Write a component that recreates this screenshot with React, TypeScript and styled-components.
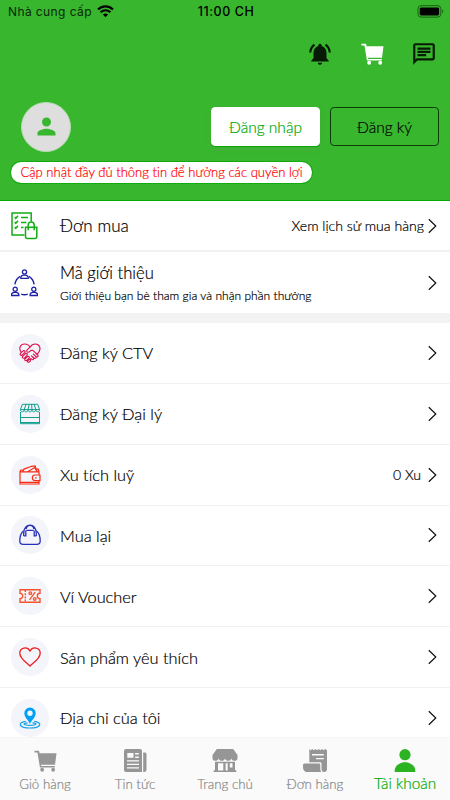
import React from "react";
import styled, { createGlobalStyle } from "styled-components";
import { MdNotificationsActive, MdOutlineChat, MdPerson } from "react-icons/md";

const GlobalStyle = createGlobalStyle`
  * { box-sizing: border-box; }
  body { margin: 0; background: #fff; }
`;

const Screen = styled.div`
  width: 450px;
  height: 800px;
  display: flex;
  flex-direction: column;
  overflow: hidden;
  background: #fff;
  color: #000;
  font-family: Lato, "Noto Sans", sans-serif;
  font-weight: 300;
  font-variant-ligatures: none;
  -webkit-text-stroke: 0.2px currentColor;
`;

const Header = styled.header`
  flex: none;
  height: 201px;
  background: #38b62e;
  border-bottom: 1px solid #00aa00;
`;

const StatusBar = styled.div`
  height: 22px;
  display: grid;
  grid-template-columns: 1fr auto 1fr;
  align-items: center;
  padding: 0 6px 0 8px;
  font-family: Inter, Roboto, sans-serif;
  font-weight: 400;
  font-size: 12px;
  line-height: 22px;
  color: #0a2808;
  -webkit-text-stroke: 0;
`;

const Carrier = styled.div`
  display: flex;
  align-items: center;
  gap: 5px;
  padding-top: 1px;
  letter-spacing: 0.4px;

  svg { margin-top: -2px; }
`;

const Clock = styled.div`
  padding-top: 1px;
  font-weight: 500;
  font-size: 12.5px;
  letter-spacing: 0.55px;
  color: #000;
`;

const BatterySlot = styled.div`
  display: flex;
  justify-content: flex-end;
`;

const Actions = styled.div`
  display: flex;
  justify-content: flex-end;
  align-items: center;
  gap: 27.5px;
  height: 26px;
  margin-top: 19px;
  padding-right: 13px;
  color: #fff;

  svg { display: block; }
`;

const Account = styled.div`
  display: flex;
  align-items: center;
  height: 50px;
  margin-top: 34.5px;
  padding: 0 11px 0 21px;
`;

const Avatar = styled.div`
  display: grid;
  place-items: center;
  width: 50px;
  height: 50px;
  margin-right: auto;
  border-radius: 50%;
  background: #dedede;
  border: 1px solid #b4dcb0;
  color: #38b62e;
`;

const AuthButton = styled.button<{ $filled?: boolean }>`
  height: 39px;
  width: 109px;
  margin-left: ${(p) => (p.$filled ? 0 : 10)}px;
  padding: 1px 0 0;
  border: 1px solid ${(p) => (p.$filled ? "#fff" : "#0b3d08")};
  border-radius: 4px;
  background: ${(p) => (p.$filled ? "#fff" : "transparent")};
  box-shadow: ${(p) => (p.$filled ? "0 1px 1px #00a800, 0 3px 5px rgba(120,160,100,.3)" : "none")};
  color: ${(p) => (p.$filled ? "#00a800" : "#000")};
  font: 300 15.5px/20px Lato, sans-serif;
  -webkit-text-stroke: 0.2px currentColor;
`;

const Notice = styled.div`
  width: 301px;
  height: 21px;
  margin: 10px 0 0 11px;
  border-radius: 11px;
  background: #fff;
  box-shadow: 0 0 0 1px #12ac10;
  color: #f00;
  font-size: 13px;
  letter-spacing: 0.03px;
  line-height: 21px;
  text-align: center;
  white-space: nowrap;
`;

const Row = styled.div<{ $height: number; $line?: number }>`
  flex: none;
  display: flex;
  align-items: center;
  height: ${(p) => p.$height}px;
  padding: 0 12px 0 11px;
  border-bottom: ${(p) => p.$line ?? 0}px solid #f1f1f2;
`;

const IconSlot = styled.div<{ $round?: boolean }>`
  flex: none;
  display: grid;
  place-items: center;
  width: ${(p) => (p.$round ? 38 : 27)}px;
  height: ${(p) => (p.$round ? 38 : 28)}px;
  margin-right: ${(p) => (p.$round ? 11 : 22)}px;
  border-radius: ${(p) => (p.$round ? "50%" : "0")};
  background: ${(p) => (p.$round ? "#f4f5fa" : "transparent")};

  svg { display: block; }
`;

const Labels = styled.div`
  flex: 1;
  white-space: nowrap;
`;

const Label = styled.div<{ $size?: number; $tracking?: number }>`
  padding-top: 1px;
  font-size: ${(p) => p.$size ?? 16.35}px;
  line-height: 22px;
  letter-spacing: ${(p) => p.$tracking ?? 0}px;
`;

const Hint = styled.div`
  padding-top: 3px;
  font-size: 12px;
  line-height: 18px;
  letter-spacing: 0.035px;
`;

const Value = styled.div<{ $gap?: number }>`
  margin-right: ${(p) => p.$gap ?? 4}px;
  padding-top: 1px;
  font-size: 14.1px;
  line-height: 20px;
  white-space: nowrap;
`;

const Band = styled.div`
  flex: none;
  height: 10px;
  background: #f3f3f3;
`;

const List = styled.main`
  flex: 1;
  min-height: 0;
  overflow: hidden;
`;

const TabBar = styled.nav`
  flex: none;
  display: grid;
  grid-template-columns: repeat(5, 1fr);
  height: 63px;
  background: #fafafa;
  border-top: 1px solid #f5f5f5;
`;

const TabIcon = styled.div`
  display: grid;
  place-items: center;
  height: 27px;

  svg { display: block; }
`;

const Tab = styled.div<{ $active?: boolean }>`
  display: flex;
  flex-direction: column;
  align-items: center;
  padding-top: 9px;
  color: ${(p) => (p.$active ? "#2bb322" : "#969696")};
`;

const TabLabel = styled.div<{ $active?: boolean }>`
  margin-top: ${(p) => (p.$active ? -1 : 0)}px;
  color: ${(p) => (p.$active ? "#00aa00" : "#888")};
  font-size: ${(p) => (p.$active ? 15.3 : 13.3)}px;
  line-height: 20px;
  white-space: nowrap;
`;

const Chevron = () => (
  <svg width="10" height="16" viewBox="0 0 10 16" fill="none" stroke="#111" strokeWidth="1.2">
    <path d="M.8 1.2 7.8 8l-7 6.8" />
  </svg>
);

const Wifi = () => (
  <svg width="17" height="13" viewBox="0 0 17 13" fill="none" stroke="#000" strokeWidth="2.1">
    <path d="M1 4.4c4.2-4.1 10.8-4.1 15 0M3.6 7.3c2.8-2.7 7-2.7 9.8 0" />
    <path d="M5.9 9.6a3.8 3.8 0 0 1 5.2 0L8.5 12.2z" fill="#000" stroke="none" />
  </svg>
);

const Battery = () => (
  <svg width="27" height="13" viewBox="0 0 27 13">
    <rect x="1" y=".7" width="22.8" height="11.4" rx="3" fill="none" stroke="#176313" />
    <rect x="2.7" y="2.4" width="19.4" height="8" rx="1.4" />
    <path d="M25.2 4.5c1.5.7 1.5 3.2 0 3.9z" fill="#176313" />
  </svg>
);

const Cart = () => (
  <svg width="23" height="22" viewBox="0 0 24 22" preserveAspectRatio="none" fill="currentColor">
    <path d="M.5.7h4.7l.7 2.6h17.6l-1.6 11.5H7.2l.3 1.3h14.2v1.4H6.2L3.6 2.5H.5z" />
    <circle cx="8.5" cy="19.8" r="2" />
    <circle cx="20" cy="19.8" r="2" />
  </svg>
);

const OrderList = () => (
  <svg width="27" height="28" viewBox="0 0 27 28" fill="none" stroke="#12ad12" strokeWidth="1.5">
    <path d="M13.5 23H1V1h19.2v8.5M10 5.5h7M10 10.5h5.5M10 15.5h2.5" />
    <path d="m3.8 5 1 1.3 2.2-2.6M3.8 10l1 1.3L7 8.7M3.8 15l1 1.3L7 13.7" />
    <path d="M14.5 15.3h11.3v9.2a2 2 0 0 1-2 2h-7.3a2 2 0 0 1-2-2zM17.2 18.3v-5.1c0-4.2 6-4.2 6 0v5.1" />
  </svg>
);

const Referral = () => (
  <svg width="27" height="28" viewBox="0 0 27 28" fill="none" stroke="#1c20a8" strokeWidth="1.3">
    {[[13.5, 0], [4.2, 17.2], [22.8, 17.2]].map(([x, y]) => (
      <g key={x} transform={`translate(${x} ${y})`}>
        <circle cx="0" cy="3" r="2.1" />
        <path d="M-3.7 9.3v-1.1c0-1.4 1.6-1.8 2.6-2.1h2.2c1 .3 2.6.7 2.6 2.1v1.1z" />
      </g>
    ))}
    <path d="M9 7.4c-2.8 1.8-4.6 4.4-5.1 8M18 7.4c2.8 1.8 4.6 4.4 5.1 8M10.2 25.2c2.1.7 4.5.7 6.6 0" />
  </svg>
);

const Handshake = () => (
  <svg width="22" height="20" viewBox="0 0 22 20" fill="none" stroke="#dc1450" strokeWidth="1.15" strokeLinejoin="round">
    <path d="M2.5 9.6C-1 5.2 1.5 1 5.7 1c2.4 0 4.3 1.2 5.3 3.2C12.3 2 14 1 16.3 1c4.3 0 6.3 4.8 3 8.8l-1.8 2.1" />
    <path d="M11 4.2 7.7 7.4c-.3 1.9 1.7 2.5 3.2 1l1.4-1.1h1.5l5.1 4.7c.8 1.5-.8 2.5-2 1.4l-2.5-2.2 2.5 2.3c.8 1.4-.8 2.5-2 1.4l-2.4-2 2.1 2.1c.6 1.4-.8 2.3-2 1.2l-1.3-1.1" />
    <path d="m2.5 9.4 2-1.8c1.4-.2 2 .8 1.4 1.8L3 12.2c-1.5.6-2.5-.8-1.5-2zM3.4 13.7l3.4-3.3c1.5-.3 2 1 1.2 2l-2.6 2.7c-1.6.5-2.6-.5-2-1.4zM5.8 16.2l3-2.9c1.5-.2 2 .9 1.2 1.9l-2.2 2.3c-1.5.5-2.5-.4-2-1.3zM8.4 18l2-1.8c1.3 0 1.5 1 .9 1.8l-1.2 1.2c-1.2.2-1.9-.4-1.7-1.2z" />
  </svg>
);

const Stall = () => (
  <svg width="22" height="22" viewBox="0 0 22 22" fill="none" stroke="#129c8d">
    <path d="M1.5 9v11.7h19V9M1.5 14.5h19M1.5 19.5h19" />
    <path d="M3.4 1.3h15.2l2 5.3H1.4zM7.1 1.3 5.2 6.6M10.2 1.3 9 6.6M12.6 1.3 13 6.6M15.2 1.3l1.6 5.3M1.4 6.6c0 3 3.8 3 3.8 0 0 3 3.9 3 3.9 0 0 3 3.9 3 3.9 0 0 3 3.8 3 3.8 0 0 3 3.8 3 3.8 0" />
  </svg>
);

const Wallet = () => (
  <svg width="22" height="20" viewBox="0 0 22 20" fill="none" stroke="#f52b16" strokeWidth="1.2">
    <path d="M20 9.7V6.8H2A1 1 0 0 1 2 5h2.2M1 6v13h19v-3.2M3.6 6.7 5 4.1l7.5-2.8 3.6-.3 1.3 4M9 6.4l6.7-3.8 2.5 4M17 4.2h2.2l.8 2.6M1 17.4h19" />
    <path d="M21 10v5.7h-4.8c-3.8 0-3.8-5.7 0-5.7zM16.2 12.9h1.4" />
  </svg>
);

const Handbag = () => (
  <svg width="22" height="22" viewBox="0 0 22 22" fill="none" stroke="#2631ba" strokeWidth="1.3">
    <path d="M4.5 7C2.2 8.8.8 13.6.8 17c0 2 1.3 3.3 3.3 3.3h13.8c2 0 3.3-1.3 3.3-3.3 0-3.4-1.4-8.2-3.7-10M7.3 6.3h7.4" />
    <path d="M4.7 12V9.5c0-11.3 12.6-11.3 12.6 0V12M6.8 6.4v5.4H4.7M15.2 6.4v5.4h2.1M7.1 5C8 .2 14 .2 14.9 5" />
  </svg>
);

const Voucher = () => (
  <svg width="22" height="16" viewBox="0 0 22 16" fill="none" stroke="#f8532f" strokeWidth="1.4">
    <path d="M1 1.7h20v3.6a2.7 2.7 0 0 0 0 5.4v3.6H1v-3.6a2.7 2.7 0 0 0 0-5.4z" />
    <path d="M6.3 2v12" strokeDasharray="2 1.2" />
    <path d="m16.2 4.2-5.7 7.6" />
    <circle cx="11.3" cy="5.2" r="1.3" />
    <circle cx="15.7" cy="10.9" r="1.3" />
  </svg>
);

const Heart = () => (
  <svg width="22" height="20" viewBox="0 0 22 20" fill="none" stroke="#f01c20" strokeWidth="1.3">
    <path d="M11 19C7.8 15.8.8 11.6.8 6.2.8.5 8.3-1 11 4c2.7-5 10.2-3.5 10.2 2.2C21.2 11.6 14.2 15.8 11 19z" />
  </svg>
);

const Pin = () => (
  <svg width="22" height="22" viewBox="0 0 22 22">
    <g fill="none" stroke="#139fea" strokeWidth="1.2">
      <path d="M6.8 14.3c-8 1.1-8 6.5 4.2 6.7 12.2-.2 12.2-5.6 4.2-6.7" />
      <path d="M8.6 15.8c-5.3.6-5 2.5 2.4 2.6 7.4-.1 7.7-2 2.4-2.6" />
    </g>
    <path fill="#00a0f4" fillRule="evenodd" d="M11 17C10 13.4 5.3 10.7 5.3 6.2a5.7 5.7 0 0 1 11.4 0c0 4.5-4.7 7.2-5.7 10.8zm0-13.5a2.7 2.7 0 1 0 0 5.4 2.7 2.7 0 0 0 0-5.4z" />
  </svg>
);

const News = () => (
  <svg width="24" height="27" viewBox="0 0 24 27">
    <path fill="currentColor" fillRule="evenodd" d="M3 2h14a2 2 0 0 1 2 2v21H3a2 2 0 0 1-2-2V4a2 2 0 0 1 2-2zm1.3 4.1v4.7h6.2V6.1zm7.8 0v1.4h3.7V6.1zm0 3.5V11h3.7V9.6zM4 13.2v1.3h12v-1.3zm0 3.5V18h12v-1.3zm0 3.5v1.3h12v-1.3zM20.2 5.5H22a1.5 1.5 0 0 1 1.5 1.5v15.7c0 1.6-1.5 2.3-3.3 2.3z" />
  </svg>
);

const Shop = () => (
  <svg width="26" height="27" viewBox="0 0 26 27" fill="currentColor">
    <path d="M4.8 2h16.4l4.3 6v3.2c0 3.5-5.5 3.5-6.2.2-.8 3.1-5.4 3.1-6.3 0-.9 3.1-5.5 3.1-6.3 0-.7 3.3-6.2 3.3-6.2-.2V8z" />
    <path fillRule="evenodd" d="M3 14.8h20v8.5h1.3V25H1.7v-1.7H3zm3 1.5v7.2h5.3v-7.2zm7.6 0v7.2h2.1v-7.2zm4.2 0v4.3h2.7v-4.3z" />
  </svg>
);

const Receipt = () => (
  <svg width="26" height="27" viewBox="0 0 26 27" fill="currentColor">
    <path fillRule="evenodd" d="m7.3 2 1.5 1.3L10.4 2 12 3.3 13.6 2l1.6 1.3L16.8 2l1.6 1.3L20 2l1.6 1.3L23.2 2l1.8 1.2V22c0 1.8-1.1 3-2.8 3-2.2 0-2.7-1.6-2.7-3v-5.4c0-.8-.6-1.4-1.4-1.4H7.3zM10 7.1v1.4h11.8V7.1zm3.9 3.8v1.4h7.9v-1.4z" />
    <path d="M1 18.3a1.6 1.6 0 0 1 1.6-1.7h14.3a1.4 1.4 0 0 1 1.4 1.4v4c0 1.3.4 2.4 1.2 3H4.8C2.4 25 1 22.6 1 20z" />
  </svg>
);

const Person = () => (
  <svg width="24" height="27" viewBox="0 0 24 27" fill="currentColor">
    <circle cx="12" cy="7.7" r="5.6" />
    <path d="M1.7 25v-1.5c0-4.7 4.8-8.3 10.3-8.3s10.3 3.6 10.3 8.3V25z" />
  </svg>
);

const menu = [
  { label: "Đăng ký CTV", icon: <Handshake /> },
  { label: "Đăng ký Đại lý", icon: <Stall /> },
  { label: "Xu tích luỹ", icon: <Wallet />, value: "0 Xu" },
  { label: "Mua lại", icon: <Handbag /> },
  { label: "Ví Voucher", icon: <Voucher /> },
  { label: "Sản phẩm yêu thích", icon: <Heart /> },
  { label: "Địa chỉ của tôi", icon: <Pin /> },
];

const tabs = [
  { label: "Giỏ hàng", icon: <Cart /> },
  { label: "Tin tức", icon: <News /> },
  { label: "Trang chủ", icon: <Shop /> },
  { label: "Đơn hàng", icon: <Receipt /> },
  { label: "Tài khoản", icon: <Person />, active: true },
];

export default function App() {
  return (
    <Screen>
      <GlobalStyle />
      <Header>
        <StatusBar>
          <Carrier>Nhà cung cấp <Wifi /></Carrier>
          <Clock>11:00 CH</Clock>
          <BatterySlot><Battery /></BatterySlot>
        </StatusBar>
        <Actions>
          <MdNotificationsActive size={26} color="#061a05" />
          <Cart />
          <MdOutlineChat size={26} color="#061a05" />
        </Actions>
        <Account>
          <Avatar><MdPerson size={27} /></Avatar>
          <AuthButton $filled>Đăng nhập</AuthButton>
          <AuthButton>Đăng ký</AuthButton>
        </Account>
        <Notice>Cập nhật đầy đủ thông tin để hưởng các quyền lợi</Notice>
      </Header>
      <Row $height={51} $line={2}>
        <IconSlot><OrderList /></IconSlot>
        <Labels><Label $size={17} $tracking={0.1}>Đơn mua</Label></Labels>
        <Value>Xem lịch sử mua hàng</Value>
        <Chevron />
      </Row>
      <Row $height={61}>
        <IconSlot><Referral /></IconSlot>
        <Labels>
          <Label $size={16.6}>Mã giới thiệu</Label>
          <Hint>Giới thiệu bạn bè tham gia và nhận phần thưởng</Hint>
        </Labels>
        <Chevron />
      </Row>
      <Band />
      <List>
        {menu.map((item) => (
          <Row key={item.label} $height={60.85} $line={1}>
            <IconSlot $round>{item.icon}</IconSlot>
            <Labels><Label>{item.label}</Label></Labels>
            {item.value && <Value $gap={7}>{item.value}</Value>}
            <Chevron />
          </Row>
        ))}
      </List>
      <TabBar>
        {tabs.map((tab) => (
          <Tab key={tab.label} $active={tab.active}>
            <TabIcon>{tab.icon}</TabIcon>
            <TabLabel $active={tab.active}>{tab.label}</TabLabel>
          </Tab>
        ))}
      </TabBar>
    </Screen>
  );
}
